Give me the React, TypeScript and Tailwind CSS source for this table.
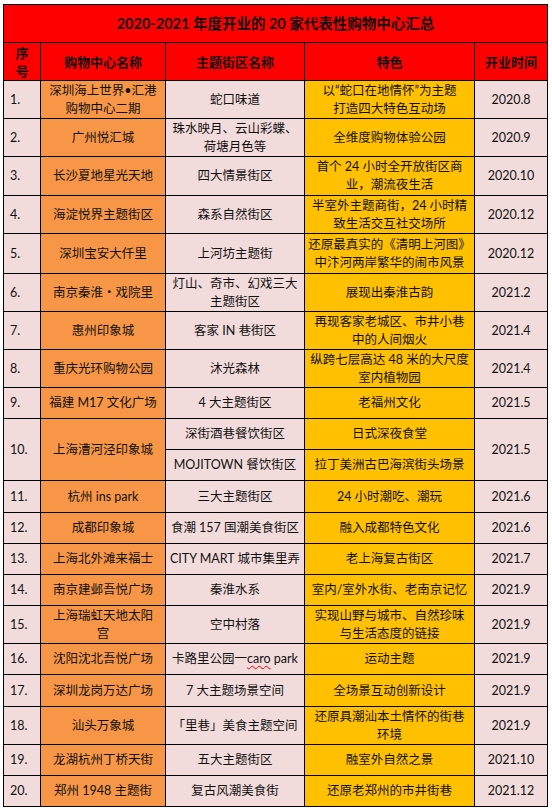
import type { ReactNode } from 'react'

type Row = {
  no: string
  name: ReactNode
  street: ReactNode
  feature: ReactNode
  date: string
}

const rows: Row[] = [
  { no: '1.', name: <>深圳海上世界•汇港<br />购物中心二期</>, street: '蛇口味道', feature: <>以“蛇口在地情怀”为主题<br />打造四大特色互动场</>, date: '2020.8' },
  { no: '2.', name: '广州悦汇城', street: <>珠水映月、云山彩蝶、<br />荷塘月色等</>, feature: '全维度购物体验公园', date: '2020.9' },
  { no: '3.', name: '长沙夏地星光天地', street: '四大情景街区', feature: <>首个 24 小时全开放街区商<br />业，潮流夜生活</>, date: '2020.10' },
  { no: '4.', name: '海淀悦界主题街区', street: '森系自然街区', feature: <>半室外主题商街，24 小时精<br />致生活交互社交场所</>, date: '2020.12' },
  { no: '5.', name: '深圳宝安大仟里', street: '上河坊主题街', feature: <>还原最真实的《清明上河图》<br />中汴河两岸繁华的闹市风景</>, date: '2020.12' },
  { no: '6.', name: '南京秦淮・戏院里', street: <>灯山、奇市、幻戏三大<br />主题街区</>, feature: '展现出秦淮古韵', date: '2021.2' },
  { no: '7.', name: '惠州印象城', street: '客家 IN 巷街区', feature: <>再现客家老城区、市井小巷<br />中的人间烟火</>, date: '2021.4' },
  { no: '8.', name: '重庆光环购物公园', street: '沐光森林', feature: <>纵跨七层高达 48 米的大尺度<br />室内植物园</>, date: '2021.4' },
  { no: '9.', name: '福建 M17 文化广场', street: '4 大主题街区', feature: '老福州文化', date: '2021.5' },
  { no: '10.', name: '上海漕河泾印象城', street: '', feature: '', date: '2021.5' },
  { no: '11.', name: '杭州 ins park', street: '三大主题街区', feature: '24 小时潮吃、潮玩', date: '2021.6' },
  { no: '12.', name: '成都印象城', street: '食潮 157 国潮美食街区', feature: '融入成都特色文化', date: '2021.6' },
  { no: '13.', name: '上海北外滩来福士', street: 'CITY MART 城市集里弄', feature: '老上海复古街区', date: '2021.7' },
  { no: '14.', name: '南京建邺吾悦广场', street: '秦淮水系', feature: '室内/室外水街、老南京记忆', date: '2021.9' },
  { no: '15.', name: <>上海瑞虹天地太阳<br />宫</>, street: '空中村落', feature: <>实现山野与城市、自然珍味<br />与生活态度的链接</>, date: '2021.9' },
  {
    no: '16.',
    name: '沈阳沈北吾悦广场',
    street: (
      <>
        卡路里公园一<span className="underline decoration-wavy decoration-red-600 decoration-1 underline-offset-2">caro</span>
        {'\u00a0'}park
      </>
    ),
    feature: '运动主题',
    date: '2021.9',
  },
  { no: '17.', name: '深圳龙岗万达广场', street: '7 大主题场景空间', feature: '全场景互动创新设计', date: '2021.9' },
  { no: '18.', name: '汕头万象城', street: '「里巷」美食主题空间', feature: <>还原具潮汕本土情怀的街巷<br />环境</>, date: '2021.9' },
  { no: '19.', name: '龙湖杭州丁桥天街', street: '五大主题街区', feature: '融室外自然之景', date: '2021.10' },
  { no: '20.', name: '郑州 1948 主题街', street: '复古风潮美食街', feature: '还原老郑州的市井街巷', date: '2021.12' },
]

const cell = 'flex items-center justify-center text-center whitespace-nowrap'

export default function App() {
  return (
    <div className="min-h-screen bg-white font-['Lato','Noto_Sans_CJK_SC',sans-serif] text-[12.5px] leading-[18px] text-[#111]">
      <div className="ml-[3px] pt-[4px]">
        <div className="grid w-[545px] gap-px bg-black p-px grid-cols-[36px_124px_138px_169px_72px] grid-rows-[37px_37px_37px_37px_38px_37px_39px_37px_37px_37px_30px_30px_30px_31px_30px_30px_30px_37px_30px_31px_37px_30px_30px]">
          {/* Title */}
          <div className={`${cell} col-span-5 bg-[#ff0000] text-[14.5px] font-bold`}>
            2020-2021 年度开业的 20 家代表性购物中心汇总
          </div>

          {/* Header */}
          <div className={`${cell} bg-[#ff0000] text-[13px] font-bold leading-[18px]`}>
            序<br />号
          </div>
          <div className={`${cell} bg-[#ff0000] text-[13px] font-bold`}>购物中心名称</div>
          <div className={`${cell} bg-[#ff0000] text-[13px] font-bold`}>主题街区名称</div>
          <div className={`${cell} bg-[#ff0000] text-[13px] font-bold`}>特色</div>
          <div className={`${cell} bg-[#ff0000] text-[13px] font-bold`}>开业时间</div>

          {rows.map((r) =>
            r.no === '10.' ? (
              <div key={r.no} className="contents">
                <div className="row-span-2 flex items-center bg-[#f2dcdb] pl-[6px]">{r.no}</div>
                <div className={`${cell} row-span-2 bg-[#f79646]`}>{r.name}</div>
                <div className={`${cell} bg-[#f2dcdb]`}>深街酒巷餐饮街区</div>
                <div className={`${cell} bg-[#ffc000]`}>日式深夜食堂</div>
                <div className={`${cell} row-span-2 bg-[#f2dcdb]`}>{r.date}</div>
                <div className={`${cell} bg-[#f2dcdb]`}>MOJITOWN 餐饮街区</div>
                <div className={`${cell} bg-[#ffc000]`}>拉丁美洲古巴海滨街头场景</div>
              </div>
            ) : (
              <div key={r.no} className="contents">
                <div className="flex items-center bg-[#f2dcdb] pl-[6px]">{r.no}</div>
                <div className={`${cell} bg-[#f79646]`}>{r.name}</div>
                <div className={`${cell} bg-[#f2dcdb]`}>{r.street}</div>
                <div className={`${cell} bg-[#ffc000]`}>{r.feature}</div>
                <div className={`${cell} bg-[#f2dcdb]`}>{r.date}</div>
              </div>
            )
          )}
        </div>
      </div>
    </div>
  )
}
